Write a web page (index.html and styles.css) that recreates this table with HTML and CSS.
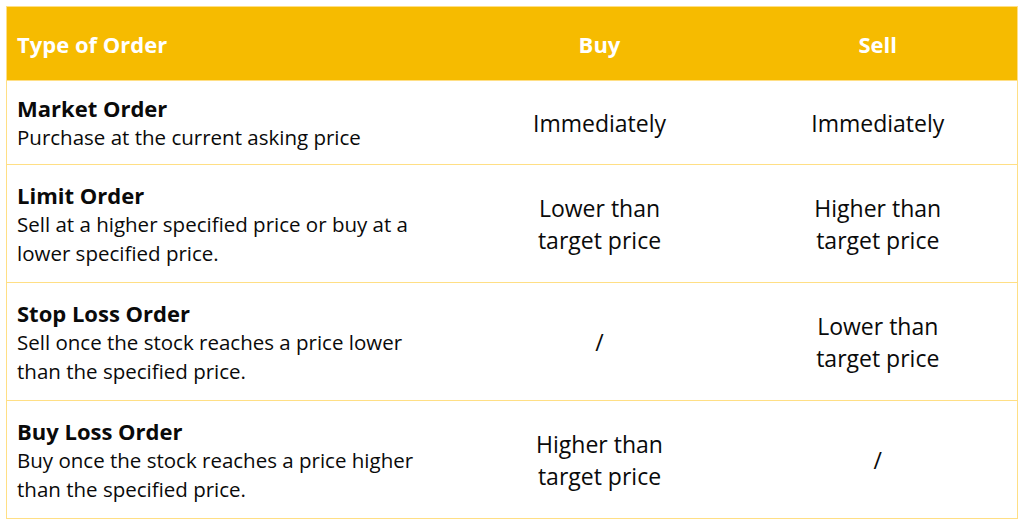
FILE: index.html
```html
<!DOCTYPE html>
<html>
<head>
<meta charset="utf-8">
<link rel="stylesheet" href="styles.css">
</head>
<body>
<table class="orders">
  <colgroup>
    <col class="c-type">
    <col class="c-buy">
    <col class="c-sell">
  </colgroup>
  <thead>
    <tr class="head">
      <th class="th-type">Type of Order</th>
      <th>Buy</th>
      <th>Sell</th>
    </tr>
  </thead>
  <tbody>
    <tr class="r1">
      <td class="type"><div class="title">Market Order</div><div class="desc">Purchase at the current asking price</div></td>
      <td class="val">Immediately</td>
      <td class="val">Immediately</td>
    </tr>
    <tr class="r2">
      <td class="type"><div class="title">Limit Order</div><div class="desc">Sell at a higher specified price or buy at a<br>lower specified price.</div></td>
      <td class="val">Lower than<br>target price</td>
      <td class="val">Higher than<br>target price</td>
    </tr>
    <tr class="r2">
      <td class="type"><div class="title">Stop Loss Order</div><div class="desc">Sell once the stock reaches a price lower<br>than the specified price.</div></td>
      <td class="val">/</td>
      <td class="val">Lower than<br>target price</td>
    </tr>
    <tr class="r2">
      <td class="type"><div class="title">Buy Loss Order</div><div class="desc">Buy once the stock reaches a price higher<br>than the specified price.</div></td>
      <td class="val">Higher than<br>target price</td>
      <td class="val">/</td>
    </tr>
  </tbody>
</table>
</body>
</html>
```
FILE: styles.css
```css
html, body {
  margin: 0;
  padding: 0;
  background: #ffffff;
}
body {
  padding: 6px 0 0 6px;
  font-family: "Open Sans", "Lato", sans-serif;
  color: #0a0a0a;
}
.orders {
  border-collapse: collapse;
  width: 1011px;
  table-layout: fixed;
  border: 1.5px solid #ffdf85;
}
.c-type { width: 454px; }
.c-buy { width: 278px; }
.c-sell { width: 279px; }
.head {
  background: #f6bb00;
  height: 74px;
}
.head th {
  color: #ffffff;
  font-weight: 700;
  font-size: 22px;
  text-align: center;
  padding: 0;
}
.head .th-type {
  text-align: left;
  padding-left: 10px;
}
tbody tr {
  border-top: 1.5px solid #ffdf85;
}
.r1 { height: 84px; }
.r2 { height: 118px; }
td {
  vertical-align: middle;
  padding: 0;
}
.type {
  padding-left: 10px;
}
.title {
  font-weight: 700;
  font-size: 22px;
  line-height: 30px;
}
.desc {
  font-size: 20.5px;
  line-height: 29px;
}
.val {
  text-align: center;
  font-size: 23px;
  line-height: 32px;
}
```
